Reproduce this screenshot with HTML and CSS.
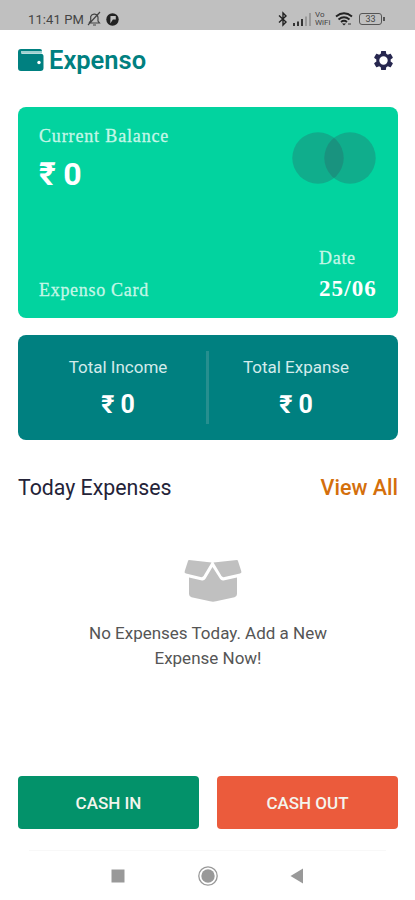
FILE: index.html
```
<!DOCTYPE html>
<html lang="en">
<head>
<meta charset="utf-8">
<title>Expenso</title>
<link rel="stylesheet" href="styles.css">
</head>
<body>
<div class="status">
  <span class="clock">11:41 PM</span>
  <svg class="mute" width="15" height="16" viewBox="0 0 15 16" fill="none" stroke="#444" stroke-width="1.2"><path d="M3 12h9.5l-1.500-2V6.500a3.800 3.800 0 0 0-7.300-1v4.500L2 12M6 14h3M1 14 13 1"/></svg>
  <svg class="app" width="13" height="13" viewBox="0 0 13 13"><circle cx="6.500" cy="6.500" r="6.200" fill="#222"/><path d="M4.500 3h5.300v3.400H6.900L4.300 10.500z" fill="#c0c0c0"/></svg>
  <span class="spacer"></span>
  <svg class="bt" width="10" height="16" viewBox="0 0 10 16" fill="none" stroke="#222" stroke-width="1.400"><path d="M1 4.500 8 11 5 14V2l3 3-7 6.500"/></svg>
  <svg class="signal" width="19" height="13" viewBox="0 0 19 13"><path d="M0 10h2v3H0zM4 8.500h2V13H4zM8 6h2v7H8z" fill="#333"/><path d="M12 3.500h2V13h-2zM16 0h2v13h-2z" fill="#999"/></svg>
  <span class="vowifi"><span>Vo</span><span>WiFi</span></span>
  <svg class="wifi" width="18" height="14" viewBox="0 0 18 14" fill="none" stroke="#222" stroke-width="1.900"><path d="M1 4.500Q9-2 17 4.500M3.500 7.500Q9 3 14.500 7.500M6 10Q9 7.600 12 10"/><path d="m7 11.500 2 2 2-2z" fill="#222" stroke="none"/><path d="M13 12h3" stroke="#777"/></svg>
  <span class="battery">33</span>
</div>
<header class="header">
  <svg width="26" height="22" viewBox="0 0 26 22"><path d="M3 0h19a2 2 0 0 1 2 2v1.200H4a.8.8 0 0 0 0 1.600h19a2.500 2.500 0 0 1 2.500 2.500V19a3 3 0 0 1-3 3H3a3 3 0 0 1-3-3V3a3 3 0 0 1 3-3z" fill="#008080"/><path d="M3 2h21v2.200H3z" fill="#9ccfcf"/><circle cx="21" cy="13.500" r="1.700" fill="#fff"/></svg>
  <h1>Expenso</h1>
  <svg class="gear" width="24" height="24" viewBox="0 0 24 24"><path fill="#27274f" fill-rule="evenodd" d="M19.430 12.980c.04-.32.070-.64.070-.98s-.03-.66-.07-.98l2.110-1.650c.19-.15.240-.42.120-.64l-2-3.460c-.12-.22-.39-.3-.61-.22l-2.490 1c-.52-.4-1.080-.73-1.690-.98l-.38-2.650C14.460 2.180 14.250 2 14 2h-4c-.25 0-.46.18-.49.420l-.38 2.650c-.61.25-1.170.59-1.690.98l-2.490-1c-.23-.09-.49 0-.61.220l-2 3.460c-.13.22-.07.49.120.64l2.110 1.650c-.04.32-.07.65-.07.980s.03.660.07.980l-2.110 1.650c-.19.15-.24.42-.12.640l2 3.460c.12.22.39.3.61.220l2.490-1c.52.4 1.080.73 1.690.98l.38 2.650c.03.24.24.420.49.420h4c.25 0 .46-.18.490-.42l.38-2.650c.61-.25 1.170-.59 1.690-.98l2.490 1c.23.09.49 0 .61-.22l2-3.460c.12-.22.07-.49-.12-.64l-2.110-1.650zM12 16.400a4.400 4.400 0 1 1 0-8.800 4.400 4.400 0 0 1 0 8.800z"/></svg>
</header>
<main>
  <section class="card">
    <div class="card-row">
      <div><div class="label balance-label">Current Balance</div><div class="balance">₹ 0</div></div>
      <svg class="rings" width="84" height="52" viewBox="0 0 84 52" fill="#2f5d62" fill-opacity=".32"><circle cx="26" cy="26" r="25.700"/><circle cx="58" cy="26" r="25.700"/></svg>
    </div>
    <div class="card-row bottom">
      <div class="label name-label">Expenso Card</div>
      <div class="date"><div class="label">Date</div><div class="day">25/06</div></div>
    </div>
  </section>
  <section class="totals">
    <div class="total"><span>Total Income</span><b>₹ 0</b></div>
    <div class="divider"></div>
    <div class="total"><span>Total Expanse</span><b>₹ 0</b></div>
  </section>
  <div class="heading"><h2>Today Expenses</h2><a>View All</a></div>
  <section class="empty">
    <svg class="box" width="58" height="42" viewBox="0 0 58 42" fill="#c0c0c0"><path d="M5 0 27.500 2.500 19.500 16q-1 1.500-3 1L2 13.500Q0 13 .7 11.300L4 1Q4.300 0 5 0zM53 0 29.500 2.500 37.500 16q1 1.500 3 1L56 13.500q2-.5 1.300-2.200L54 1Q53.700 0 53 0z"/><path d="M5 17.500 18 20.500q2.200.4 3.500-1.700L28.500 7l7.500 11.800q1.300 2.100 3.500 1.700L53 17.500V34q0 2.500-2.500 3.200L32 41.300q-3 .7-6 0L7.500 37.200Q5 36.500 5 34z"/></svg>
    <p>No Expenses Today. Add a New<br>Expense Now!</p>
  </section>
  <div class="actions"><button class="in">CASH IN</button><button class="out">CASH OUT</button></div>
</main>
<nav class="nav">
  <svg width="14" height="14" viewBox="0 0 14 14"><path d="M.5.5h13v13H.5z" fill="#999"/></svg>
  <svg width="20" height="20" viewBox="0 0 20 20"><circle cx="10" cy="10" r="9.200" fill="none" stroke="#999" stroke-width="1.300"/><circle cx="10" cy="10" r="6.700" fill="#999"/></svg>
  <svg width="14" height="16" viewBox="0 0 14 16"><path d="M13 .5v15L.5 8z" fill="#999"/></svg>
</nav>
</body>
</html>
```
FILE: styles.css
```
* { box-sizing: border-box; }
body { margin: 0; width: 415px; height: 900px; background: #fff; font-family: Roboto, "Noto Sans", sans-serif; display: flex; flex-direction: column; overflow: hidden; }
svg { display: block; flex: none; }
h1, h2, p { margin: 0; }

.status { height: 30px; flex: none; background: #c0c0c0; display: flex; align-items: center; padding: 8px 30px 0 28px; color: #444; }
.clock { font-size: 13px; width: 57px; letter-spacing: .1px; white-space: nowrap; }
.mute { margin-left: 2px; }
.app { margin-left: 4px; }
.spacer { flex: 1; }
.signal { margin-left: 5px; }
.vowifi { display: flex; flex-direction: column; font-size: 8px; line-height: 8px; width: 17px; margin-left: 3px; font-weight: 400; }
.wifi { margin-left: 3px; }
.battery { width: 23px; height: 12px; margin: 0 3px 0 6px; border: 1.500px solid #555; border-radius: 3px; font-size: 9px; line-height: 10px; text-align: center; position: relative; }
.battery::after { content: ""; position: absolute; right: -4px; top: 3px; width: 2px; height: 4px; background: #555; }

.header { height: 60px; flex: none; display: flex; align-items: center; padding: 0 19px 0 18px; }
.header h1 { margin-left: 5px; font-size: 25.500px; font-weight: 600; line-height: 30px; color: #008080; }
.gear { margin-left: auto; width: 23px; height: 23px; margin-right: 1px; }

main { padding: 17px 17px 0 18px; height: 739px; flex: none; display: flex; flex-direction: column; }
.card { height: 211px; border-radius: 8px; background: #02d39f; color: #fff; padding: 17px 21px 16px; display: flex; flex-direction: column; justify-content: space-between; font-family: "Liberation Serif", serif; }
.card-row { display: flex; justify-content: space-between; }
.bottom { align-items: flex-end; }
.label { font-size: 18px; line-height: 24px; letter-spacing: .7px; color: #c5f7e7; -webkit-text-stroke: .3px #c5f7e7; }
.balance-label { letter-spacing: .85px; }
.balance { font: 700 32px/38px Roboto, "Noto Sans", sans-serif; margin-top: 7px; letter-spacing: -.3px; }
.rings { margin: 8px 1px 0 0; }
.date { width: 58px; }
.day { font-size: 23px; line-height: 26px; font-weight: 700; margin-top: 6px; letter-spacing: 1.100px; }

.totals { height: 105px; margin-top: 17px; background: #008080; border-radius: 8px; display: flex; align-items: center; padding: 0 13px; color: #fff; }
.total { flex: 1; display: flex; flex-direction: column; align-items: center; }
.total span { font-size: 17px; line-height: 22px; color: #d3ebeb; }
.total b { font-size: 25px; line-height: 30px; margin-top: 12px; }
.total:first-child { padding-right: 1px; }
.total:last-child { padding-right: 2px; }
.divider { width: 3px; height: 73px; background: #268f8f; }

.heading { display: flex; justify-content: space-between; margin-top: 34px; font-size: 21.500px; line-height: 28px; }
.heading h2 { font-size: 21.300px; font-weight: 400; color: #242338; }
.heading a { color: #d46f0c; font-weight: 500; }

.empty { margin-top: 58px; display: flex; flex-direction: column; align-items: center; }
.box { margin-left: 10px; }
.empty p { margin: 19px 0 0; font-size: 17px; line-height: 25px; text-align: center; color: #555; }
.actions { margin-top: auto; margin-bottom: 0; display: grid; grid-template-columns: 181px 181px; justify-content: space-between; }
.actions button { height: 53px; border: 0; border-radius: 4px; font: 500 17px/20px Roboto, sans-serif; color: #f4f5ee; padding: 0; }
.in { background: #03926a; }
.out { background: #eb5b3c; }

.nav { height: 50px; margin: 21px 29px 0; border-top: 1px solid #f8f8f8; display: flex; justify-content: space-between; align-items: center; padding: 0 82px; }
```
